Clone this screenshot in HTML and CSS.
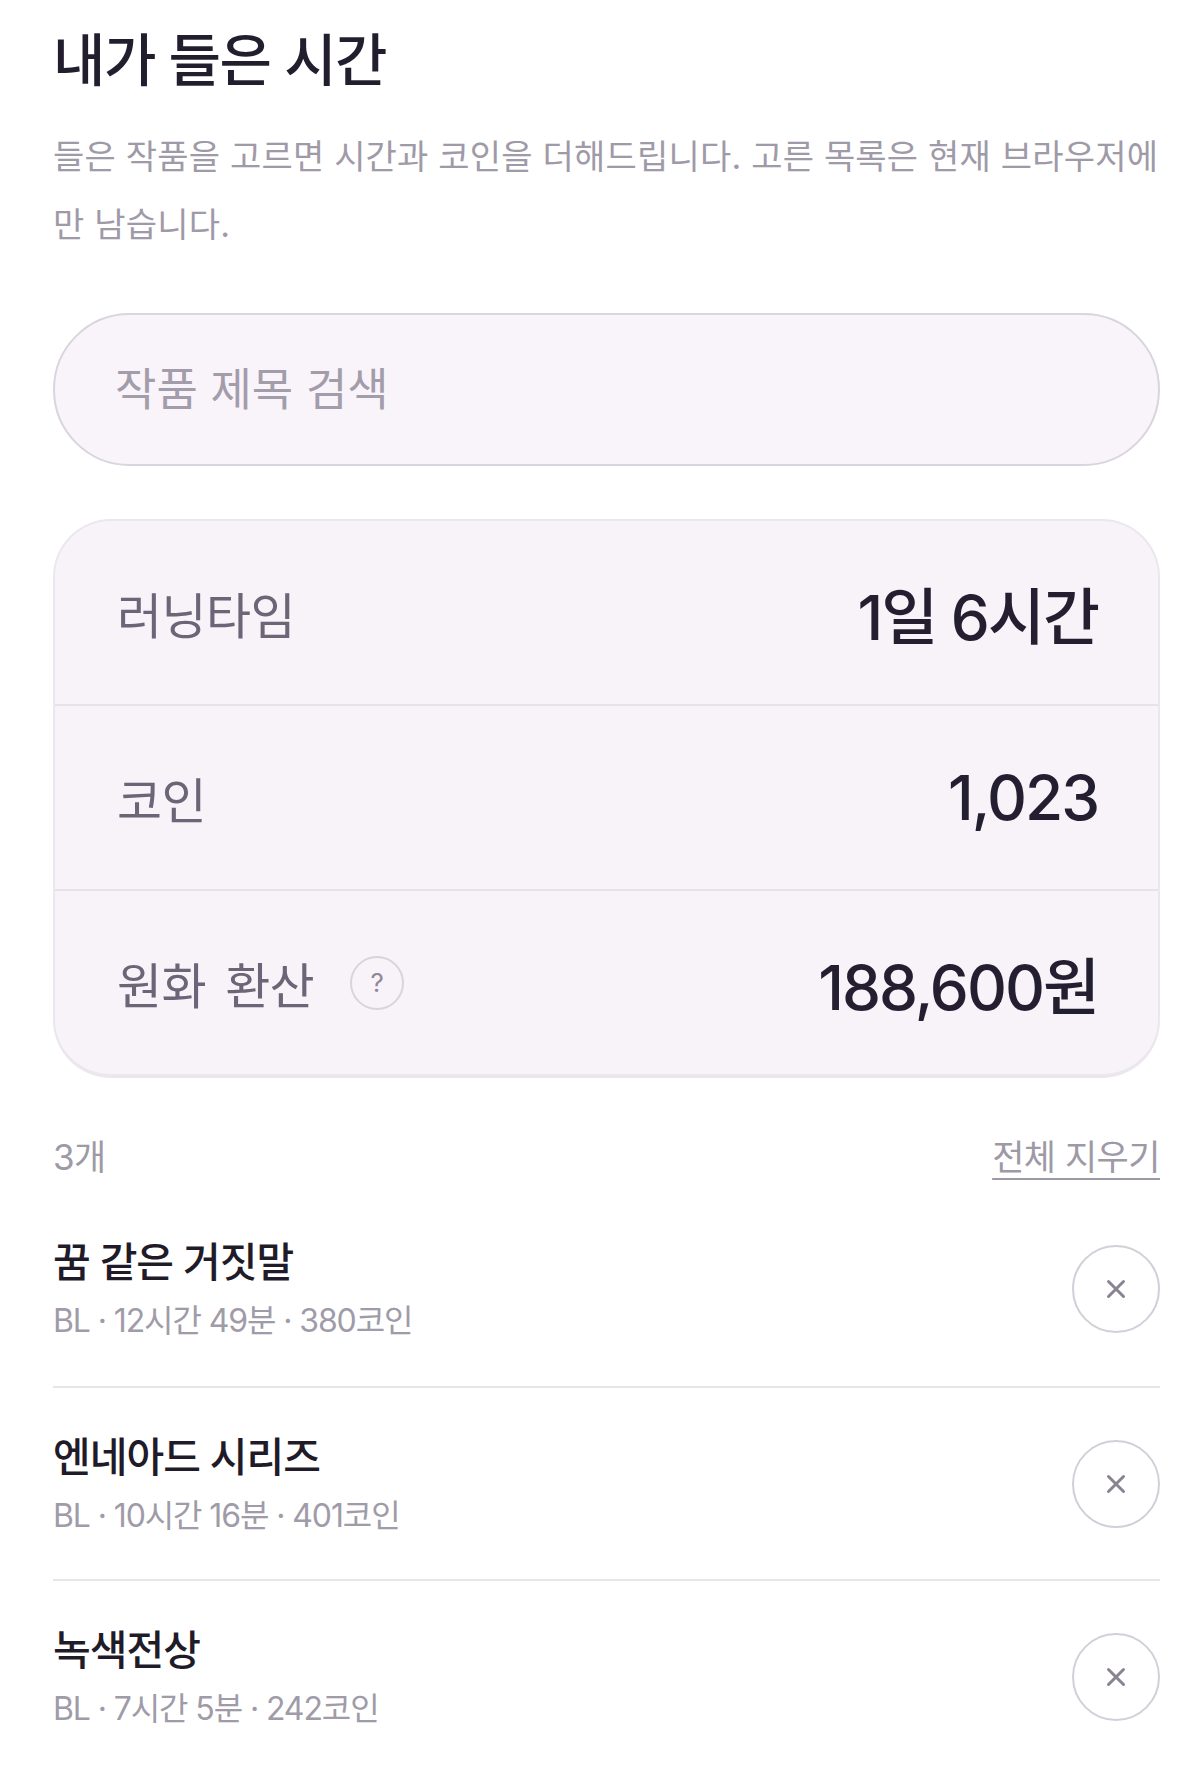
FILE: index.html
```html
<!DOCTYPE html>
<html lang="ko">
<head>
    <meta charset="UTF-8">
    <meta name="viewport" content="width=device-width, initial-scale=1.0">
    <title>내가 들은 시간</title>
    <link rel="stylesheet" href="styles.css">
</head>
<body>
    <div class="page">
        <!-- Header -->
        <h1 class="title">내가 들은 시간</h1>
        <p class="desc">들은 작품을 고르면 시간과 코인을 더해드립니다. 고른 목록은 현재 브라우저에만 남습니다.</p>

        <!-- Search -->
        <input class="search" type="text" placeholder="작품 제목 검색">

        <!-- Totals -->
        <div class="stats">
            <div class="stat-row">
                <span class="stat-label">러닝타임</span>
                <span class="stat-value">1일 6시간</span>
            </div>
            <div class="stat-row">
                <span class="stat-label">코인</span>
                <span class="stat-value">1,023</span>
            </div>
            <div class="stat-row">
                <span class="stat-label">원화 환산 <span class="help">?</span></span>
                <span class="stat-value">188,600원</span>
            </div>
        </div>

        <!-- Picked list -->
        <div class="list-head">
            <span class="count">3개</span>
            <a class="clear" href="#">전체 지우기</a>
        </div>

        <ul class="list">
            <li class="item">
                <div class="item-text">
                    <div class="item-title">꿈 같은 거짓말</div>
                    <div class="item-meta">BL · 12시간 49분 · 380코인</div>
                </div>
                <button class="remove" type="button" aria-label="삭제">
                    <svg viewBox="0 0 22 22" width="22" height="22"><path d="M3.5 3.5 L18.5 18.5 M18.5 3.5 L3.5 18.5" stroke="currentColor" stroke-width="3" stroke-linecap="round" fill="none"/></svg>
                </button>
            </li>
            <li class="item">
                <div class="item-text">
                    <div class="item-title">엔네아드 시리즈</div>
                    <div class="item-meta">BL · 10시간 16분 · 401코인</div>
                </div>
                <button class="remove" type="button" aria-label="삭제">
                    <svg viewBox="0 0 22 22" width="22" height="22"><path d="M3.5 3.5 L18.5 18.5 M18.5 3.5 L3.5 18.5" stroke="currentColor" stroke-width="3" stroke-linecap="round" fill="none"/></svg>
                </button>
            </li>
            <li class="item">
                <div class="item-text">
                    <div class="item-title">녹색전상</div>
                    <div class="item-meta">BL · 7시간 5분 · 242코인</div>
                </div>
                <button class="remove" type="button" aria-label="삭제">
                    <svg viewBox="0 0 22 22" width="22" height="22"><path d="M3.5 3.5 L18.5 18.5 M18.5 3.5 L3.5 18.5" stroke="currentColor" stroke-width="3" stroke-linecap="round" fill="none"/></svg>
                </button>
            </li>
        </ul>
    </div>
</body>
</html>
```

FILE: styles.css
```css
body { margin: 0; background: #fff; font-family: Inter, "Noto Sans CJK KR", sans-serif; color: #221e2e; }
.page { padding: 29px 40px 0 53px; }

.title { margin: 0; font-size: 57px; font-weight: 500; line-height: 64px; letter-spacing: -1.5px; color: #221e2e; }
.desc { margin: 30px 0 0; font-size: 34px; line-height: 68px; letter-spacing: 0.2px; color: #9f9aa7; }

.search { display: block; box-sizing: border-box; width: 100%; height: 153px; margin-top: 54px; padding: 0 60px; border: 2px solid #d9d4de; border-radius: 77px; background: #f8f4fa; font-family: inherit; font-size: 45px; letter-spacing: 0; color: #221e2e; outline: none; }
.search::placeholder { color: #a39dab; }

.stats { margin-top: 53px; border: 2px solid #ebe7ee; border-bottom-width: 4px; border-radius: 58px; background: #f7f3f9; overflow: hidden; }
.stat-row { display: flex; align-items: center; justify-content: space-between; height: 183px; padding: 0 60px 0 62px; border-top: 2px solid #e6e2ea; }
.stat-row:first-child { border-top: none; }
.stat-label { display: flex; align-items: center; font-size: 49px; letter-spacing: -0.6px; word-spacing: 6px; color: #6b6577; }
.stat-value { font-size: 62px; font-weight: 500; letter-spacing: -2px; color: #231f30; }
.help { display: inline-flex; align-items: center; justify-content: center; box-sizing: border-box; width: 54px; height: 54px; margin-left: 36px; border: 2px solid #d8d4dc; border-radius: 50%; font-size: 26px; letter-spacing: 0; color: #8e8898; }

.list-head { display: flex; align-items: center; justify-content: space-between; margin-top: 38px; height: 76px; }
.count { font-size: 35px; letter-spacing: -0.5px; color: #9e99a6; }
.clear { font-size: 35px; letter-spacing: -0.5px; color: #9e99a6; text-decoration: underline; text-decoration-thickness: 2px; text-underline-offset: 8px; }

.list { list-style: none; margin: 0; padding: 0; }
.item { display: flex; align-items: center; justify-content: space-between; height: 191px; border-top: 2px solid #e6e6e9; }
.item:first-child { border-top: none; height: 194px; }
.item-title { font-size: 41px; font-weight: 500; line-height: 50px; letter-spacing: -1px; color: #1f1b29; }
.item-meta { margin-top: 14px; font-size: 32px; line-height: 40px; letter-spacing: -1.1px; color: #a09ba8; }
.remove { display: flex; align-items: center; justify-content: center; box-sizing: border-box; width: 88px; height: 88px; padding: 0; border: 2px solid #d3cfd8; border-radius: 50%; background: #fff; color: #898392; cursor: pointer; }
```
